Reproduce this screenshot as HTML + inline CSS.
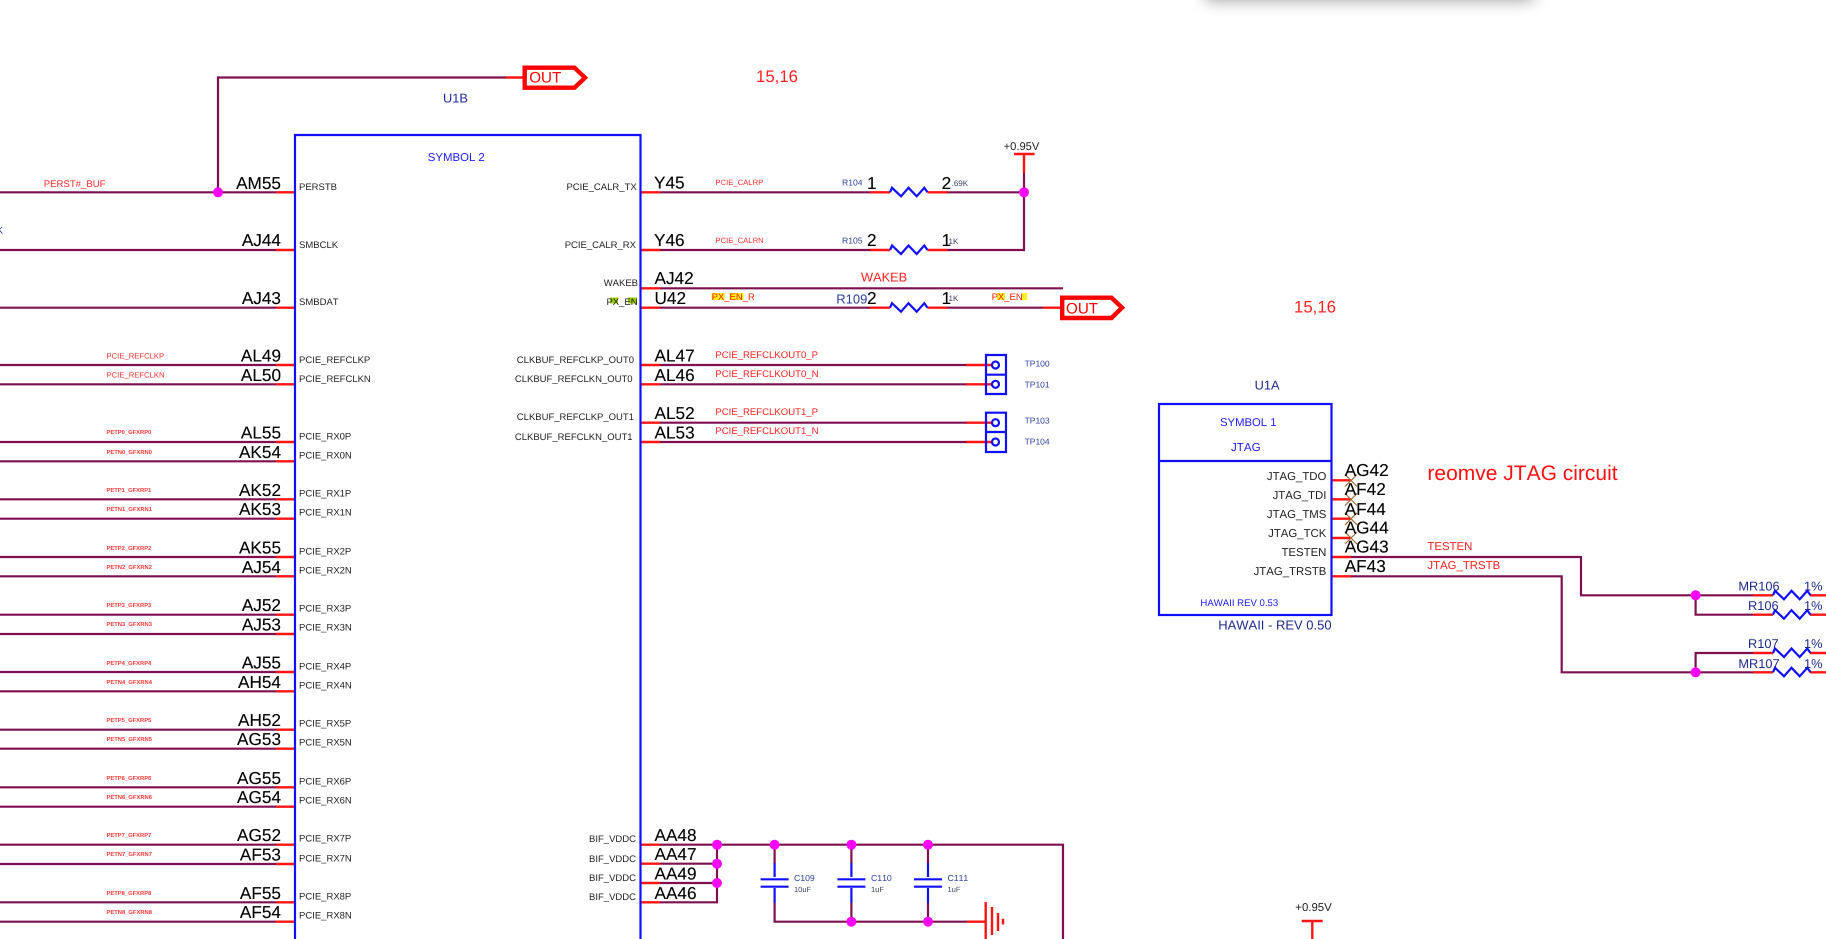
<!DOCTYPE html>
<html><head><meta charset="utf-8"><style>
html,body{margin:0;padding:0;background:#fff;width:1826px;height:939px;overflow:hidden}
svg{position:absolute;left:0;top:0;filter:blur(.3px)}
#sh{position:absolute;left:1206px;top:-50px;width:327px;height:40px;background:#fff;box-shadow:0 10px 16px rgba(0,0,0,.4)}
text{font-family:"Liberation Sans",sans-serif;font-kerning:none;text-rendering:geometricPrecision}
.w{fill:none;stroke:#7f1050;stroke-width:2.2}
.r{fill:none;stroke:#ff1414;stroke-width:2.4}
.b{fill:none;stroke:#1010ff;stroke-width:2.2}
.n{font-size:17.2px;fill:#000;stroke:#000;stroke-width:.12}
.p{font-size:9.5px;fill:#222}
.a{font-size:7.7px;fill:#ff3030}
.c{font-size:5.8px;fill:#ff3838;font-weight:700}
.d{font-size:9.57px;fill:#ff2020}
.t{font-size:8.5px;fill:#2a3f9c}
.j{font-size:11.4px;fill:#222}
.m{font-size:12.8px;fill:#1d2a8a}
</style></head><body>
<div id="sh"></div>
<svg width="1826" height="939" viewBox="0 0 1826 939" xmlns="http://www.w3.org/2000/svg">
<defs>
<path id="z" d="M0,0 L2,-4.5 L11,4 L18.5,-4.5 L26.7,4 L34.3,-4.5 L37.5,0" fill="none" stroke="#1010ff" stroke-width="2.2"/>
</defs>

<!-- wires -->
<path class="w" d="M218,192.3V77.5H506 M0,192.3H276 M0,250H276 M0,307.7H276 M0,365H276 M0,384.3H276 M0,442H276 M0,461.3H276 M0,499.3H276 M0,518.7H276 M0,557H276 M0,576.3H276 M0,614.7H276 M0,634H276 M0,672H276 M0,691.3H276 M0,729.7H276 M0,748.7H276 M0,787.3H276 M0,806.7H276 M0,844.7H276 M0,864H276 M0,902.3H276 M0,921.7H276"/>
<path class="w" d="M660,192.3H870 M947.5,192.3H1024V173 M660,250H870 M947.5,250H1024V192.3 M660,288.3H1063 M660,307.7H870 M947.5,307.7H1043 M660,365H966 M660,384.3H966 M660,422.7H966 M660,442H966"/>
<path class="w" d="M660,844.7H1063V939 M660,863.7H717 M660,883H717 M660,902.3H717V844.7 M774.6,844.7V863 M851.4,844.7V863 M928,844.7V863 M774.6,903V921.7H967 M851.4,903V921.7 M928,903V921.7"/>
<path class="w" d="M1351,557H1581V595.3H1753 M1695.6,595.3V614.7H1753 M1351,576.3H1561.7V672.3H1753 M1695.6,672.3V653H1753"/>

<!-- red stubs -->
<path class="r" d="M506,77.5H523 M276,192.3H294 M276,250H294 M276,307.7H294 M276,365H294 M276,384.3H294 M276,442H294 M276,461.3H294 M276,499.3H294 M276,518.7H294 M276,557H294 M276,576.3H294 M276,614.7H294 M276,634H294 M276,672H294 M276,691.3H294 M276,729.7H294 M276,748.7H294 M276,787.3H294 M276,806.7H294 M276,844.7H294 M276,864H294 M276,902.3H294 M276,921.7H294"/>
<path class="r" d="M641,192.3H660 M641,250H660 M641,288.3H660 M641,307.7H660 M641,365H660 M641,384.3H660 M641,422.7H660 M641,442H660 M641,844.7H660 M641,863.7H660 M641,883H660 M641,902.3H660"/>
<path class="r" d="M870,192.3H890 M927.5,192.3H947.5 M870,250H890 M927.5,250H947.5 M870,307.7H890 M927.5,307.7H947.5 M1043,307.7H1061 M966,365H992 M966,384.3H992 M966,422.7H992 M966,442H992 M1024,173V154 M1014,154H1034.6"/>
<path class="r" d="M967,921.7H985.7 M985.7,902V939 M992,907V935 M998,913V931 M1003,918.7V924.5"/>
<path class="r" d="M1332,480.3H1351 M1332,499.3H1351 M1332,518.7H1351 M1332,538H1351 M1332,557H1351 M1332,576.3H1351 M1753,595.3H1773 M1810,595.3H1826 M1753,614.7H1773 M1810,614.7H1826 M1753,653H1773 M1810,653H1826 M1753,672.3H1773 M1810,672.3H1826"/>
<path class="r" d="M1312.3,921V939 M1301.7,921H1322.7"/>
<path d="M1345,474.5L1357,486.5M1357,474.5L1345,486.5M1345,493.5L1357,505.5M1357,493.5L1345,505.5M1345,512.8L1357,524.8M1357,512.8L1345,524.8M1345,532L1357,544M1357,532L1345,544" stroke="#a06a30" stroke-width="1.2" fill="none"/>

<!-- OUT flags -->
<path d="M524.7,67.7H574.5L585,77.7L574.5,87.7H524.7Z" fill="#fff" stroke="#f00" stroke-width="4.4"/>
<path d="M1062.2,297.7H1111.5L1122,307.7L1111.5,318H1062.2Z" fill="#fff" stroke="#f00" stroke-width="4.4"/>

<!-- symbol boxes -->
<path class="b" d="M295,939V135H640.5V939"/>
<rect class="b" x="1159" y="404" width="172.5" height="211"/>
<path class="b" d="M1159,461H1331.5"/>
<path class="b" d="M986,355H1006V394H986Z M986,374.7H1006 M986,412.7H1006V452H986Z M986,432H1006"/>
<g fill="#fff" stroke="#1010ff" stroke-width="2.2">
<circle cx="995.5" cy="365" r="3.5"/><circle cx="995.5" cy="384.3" r="3.5"/><circle cx="995.5" cy="422.7" r="3.5"/><circle cx="995.5" cy="442" r="3.5"/>
</g>

<!-- resistors -->
<use href="#z" x="890" y="192.3"/><use href="#z" x="890" y="250"/><use href="#z" x="890" y="307.7"/>
<use href="#z" x="1773" y="595.3"/><use href="#z" x="1773" y="614.7"/><use href="#z" x="1773" y="653"/><use href="#z" x="1773" y="672.3"/>

<!-- capacitors -->
<path class="b" d="M774.6,863V877 M760.6,879.3H788.6 M760.6,886.7H788.6 M774.6,888V903 M851.4,863V877 M837.4,879.3H865.4 M837.4,886.7H865.4 M851.4,888V903 M928,863V877 M914,879.3H942 M914,886.7H942 M928,888V903"/>

<!-- junctions -->
<g fill="#ff00ff">
<circle cx="218" cy="192.3" r="5"/><circle cx="1024" cy="192.3" r="5"/>
<circle cx="717" cy="844.7" r="5"/><circle cx="717" cy="863.7" r="5"/><circle cx="717" cy="883" r="5"/>
<circle cx="774.6" cy="844.7" r="5"/><circle cx="851.4" cy="844.7" r="5"/><circle cx="928" cy="844.7" r="5"/>
<circle cx="851.4" cy="921.7" r="5"/><circle cx="928" cy="921.7" r="5"/>
<circle cx="1695.6" cy="595.3" r="5"/><circle cx="1695.6" cy="672.3" r="5"/>
</g>

<!-- highlights -->
<rect x="610" y="297.5" width="8" height="6" fill="#9ccc10"/><rect x="628" y="297.5" width="9" height="6" fill="#9ccc10"/>
<rect x="711.6" y="293" width="13" height="7" fill="#ffee20"/><rect x="729.5" y="293" width="14" height="7" fill="#ffee20"/>
<rect x="997" y="293" width="8" height="7" fill="#ffee20"/><rect x="1022" y="293" width="5" height="7" fill="#ffee20"/>

<!-- left pin numbers -->
<g class="n" text-anchor="end">
<text x="281" y="188.8">AM55</text><text x="281" y="246.2">AJ44</text><text x="281" y="304.2">AJ43</text><text x="281" y="361.5">AL49</text><text x="281" y="380.8">AL50</text><text x="281" y="438.5">AL55</text><text x="281" y="457.8">AK54</text><text x="281" y="495.8">AK52</text><text x="281" y="515.2">AK53</text><text x="281" y="553.5">AK55</text><text x="281" y="572.8">AJ54</text><text x="281" y="611.2">AJ52</text><text x="281" y="630.5">AJ53</text><text x="281" y="668.5">AJ55</text><text x="281" y="687.8">AH54</text><text x="281" y="726.2">AH52</text><text x="281" y="745.2">AG53</text><text x="281" y="783.8">AG55</text><text x="281" y="803.2">AG54</text><text x="281" y="841.2">AG52</text><text x="281" y="860.5">AF53</text><text x="281" y="898.8">AF55</text><text x="281" y="918.2">AF54</text>
</g>

<!-- left pin labels -->
<g class="p" transform="translate(0,-.5)">
<text x="299" y="190.5">PERSTB</text><text x="299" y="248.5">SMBCLK</text><text x="299" y="305.5">SMBDAT</text><text x="299" y="363.5">PCIE_REFCLKP</text><text x="299" y="382.5">PCIE_REFCLKN</text><text x="299" y="440">PCIE_RX0P</text><text x="299" y="459">PCIE_RX0N</text><text x="299" y="497">PCIE_RX1P</text><text x="299" y="516">PCIE_RX1N</text><text x="299" y="555">PCIE_RX2P</text><text x="299" y="574">PCIE_RX2N</text><text x="299" y="612">PCIE_RX3P</text><text x="299" y="631">PCIE_RX3N</text><text x="299" y="670">PCIE_RX4P</text><text x="299" y="689">PCIE_RX4N</text><text x="299" y="727">PCIE_RX5P</text><text x="299" y="746">PCIE_RX5N</text><text x="299" y="785">PCIE_RX6P</text><text x="299" y="804">PCIE_RX6N</text><text x="299" y="842">PCIE_RX7P</text><text x="299" y="862">PCIE_RX7N</text><text x="299" y="900">PCIE_RX8P</text><text x="299" y="919">PCIE_RX8N</text>
</g>

<!-- left net names -->
<text x="43.7" y="187" style="font-size:9.6px;fill:#ff2a2a">PERST#_BUF</text>
<text x="3" y="233.5" text-anchor="end" style="font-size:9.5px;fill:#1d2a8a">K</text>
<g class="a"><text x="106.5" y="358.3">PCIE_REFCLKP</text><text x="106.5" y="377.3">PCIE_REFCLKN</text></g>
<g class="c">
<text x="106.5" y="434">PETP0_GFXRP0</text><text x="106.5" y="454">PETN0_GFXRN0</text>
<text x="106.5" y="492">PETP1_GFXRP1</text><text x="106.5" y="511">PETN1_GFXRN1</text>
<text x="106.5" y="550">PETP2_GFXRP2</text><text x="106.5" y="569">PETN2_GFXRN2</text>
<text x="106.5" y="607">PETP3_GFXRP3</text><text x="106.5" y="626">PETN3_GFXRN3</text>
<text x="106.5" y="665">PETP4_GFXRP4</text><text x="106.5" y="684">PETN4_GFXRN4</text>
<text x="106.5" y="722">PETP5_GFXRP5</text><text x="106.5" y="741">PETN5_GFXRN5</text>
<text x="106.5" y="780">PETP6_GFXRP6</text><text x="106.5" y="799">PETN6_GFXRN6</text>
<text x="106.5" y="837">PETP7_GFXRP7</text><text x="106.5" y="856">PETN7_GFXRN7</text>
<text x="106.5" y="895">PETP8_GFXRP8</text><text x="106.5" y="914">PETN8_GFXRN8</text>
</g>

<!-- right pin labels -->
<g class="p" text-anchor="end">
<text x="636.7" y="190">PCIE_CALR_TX</text><text x="636" y="248">PCIE_CALR_RX</text><text x="638" y="286">WAKEB</text><text x="637.6" y="305">PX_EN</text>
<text x="634" y="363">CLKBUF_REFCLKP_OUT0</text><text x="632.6" y="382">CLKBUF_REFCLKN_OUT0</text><text x="634" y="420">CLKBUF_REFCLKP_OUT1</text><text x="632.6" y="440">CLKBUF_REFCLKN_OUT1</text>
<text x="636" y="842">BIF_VDDC</text><text x="636" y="862">BIF_VDDC</text><text x="636" y="881">BIF_VDDC</text><text x="636" y="900">BIF_VDDC</text>
</g>

<!-- right pin numbers -->
<g class="n">
<text x="654" y="188.6">Y45</text><text x="654" y="246.2">Y46</text><text x="654.5" y="284">AJ42</text><text x="654.5" y="304">U42</text><text x="654.5" y="361.5">AL47</text><text x="654.5" y="380.8">AL46</text><text x="654.5" y="419.2">AL52</text><text x="654.5" y="438.5">AL53</text>
<text x="654.5" y="841.2">AA48</text><text x="654.5" y="860.2">AA47</text><text x="654.5" y="879.5">AA49</text><text x="654.5" y="898.8">AA46</text>
<text x="867" y="188.8">1</text><text x="941.6" y="188.8">2</text><text x="867" y="246.2">2</text><text x="941.6" y="246.2">1</text><text x="867" y="304">2</text><text x="941.6" y="304">1</text>
</g>

<!-- right net names -->
<g class="a"><text x="715.4" y="185">PCIE_CALRP</text><text x="715.4" y="243">PCIE_CALRN</text></g>
<text x="711.6" y="300" style="font-size:9.5px;fill:#f22000">PX_EN_R</text>
<text x="991.6" y="300" style="font-size:9.5px;fill:#f22000">PX_EN</text>
<text x="861" y="281.5" style="font-size:12.8px;fill:#ff2020">WAKEB</text>
<g class="d">
<text x="715.4" y="358">PCIE_REFCLKOUT0_P</text><text x="715.4" y="377">PCIE_REFCLKOUT0_N</text><text x="715.4" y="415">PCIE_REFCLKOUT1_P</text><text x="715.4" y="434">PCIE_REFCLKOUT1_N</text>
</g>
<g style="font-size:8.6px;fill:#2a3f9c">
<text x="842" y="185.7">R104</text><text x="842" y="243.7">R105</text>
</g>
<text x="836.3" y="303.3" style="font-size:13px;fill:#2a3f9c">R109</text>
<g style="font-size:8px;fill:#3a3f60">
<text x="951.6" y="186">.69K</text><text x="948.5" y="244">1K</text><text x="948.5" y="301">1K</text>
</g>
<g class="t">
<text x="1024.6" y="366.7">TP100</text><text x="1024.6" y="387.7">TP101</text><text x="1024.6" y="423.7">TP103</text><text x="1024.6" y="444.7">TP104</text>
</g>
<g style="font-size:8.7px;fill:#2a3f9c">
<text x="794" y="880.8">C109</text><text x="871" y="880.8">C110</text><text x="947.5" y="880.8">C111</text>
</g>
<g style="font-size:7.5px;fill:#3a3f60">
<text x="794" y="892">10uF</text><text x="871" y="892">1uF</text><text x="947.5" y="892">1uF</text>
</g>

<!-- titles -->
<text x="529.2" y="82.4" style="font-size:15.2px;fill:#f00">OUT</text>
<text x="1066" y="313.3" style="font-size:15.2px;fill:#f00">OUT</text>
<text x="756" y="82" style="font-size:16.8px;fill:#f22">15,16</text>
<text x="1294" y="312.4" style="font-size:16.8px;fill:#f22">15,16</text>
<text x="443" y="102.5" style="font-size:12.8px;fill:#1d2a9a">U1B</text>
<text x="427.8" y="161" style="font-size:11.4px;fill:#2020ff">SYMBOL 2</text>
<text x="1003.6" y="150" style="font-size:11.2px;fill:#222">+0.95V</text>
<text x="1295.3" y="911" style="font-size:11.4px;fill:#222">+0.95V</text>

<!-- JTAG -->
<text x="1254.6" y="389.5" style="font-size:12.8px;fill:#1d2a8a">U1A</text>
<text x="1220" y="426" style="font-size:11.3px;fill:#2020ff">SYMBOL 1</text>
<text x="1231" y="451" style="font-size:11.6px;fill:#2020ff">JTAG</text>
<g class="j" text-anchor="end">
<text x="1326.4" y="480">JTAG_TDO</text><text x="1326.4" y="499">JTAG_TDI</text><text x="1326.4" y="518">JTAG_TMS</text><text x="1326.4" y="537">JTAG_TCK</text><text x="1326.4" y="556">TESTEN</text><text x="1326.4" y="575">JTAG_TRSTB</text>
</g>
<g class="n">
<text x="1344.7" y="476">AG42</text><text x="1344.7" y="495">AF42</text><text x="1344.7" y="515">AF44</text><text x="1344.7" y="533.7">AG44</text><text x="1344.7" y="552.7">AG43</text><text x="1344.7" y="572">AF43</text>
</g>
<text x="1427.4" y="480" style="font-size:21px;fill:#f11">reomve JTAG circuit</text>
<text x="1427.4" y="550" style="font-size:11.4px;fill:#ff2020">TESTEN</text>
<text x="1427.4" y="569" style="font-size:11.4px;fill:#ff2020">JTAG_TRSTB</text>
<text x="1200.4" y="606" style="font-size:9.6px;fill:#2020ff">HAWAII REV 0.53</text>
<text x="1218.2" y="629.5" style="font-size:13px;fill:#1d2a8a">HAWAII - REV 0.50</text>
<g class="m">
<text x="1738.4" y="590.7">MR106</text><text x="1748" y="610">R106</text><text x="1748" y="648">R107</text><text x="1738.4" y="668">MR107</text>
<text x="1804" y="590.7">1%</text><text x="1804" y="610">1%</text><text x="1804" y="648">1%</text><text x="1804" y="668">1%</text>
</g>
</svg>
</body></html>
